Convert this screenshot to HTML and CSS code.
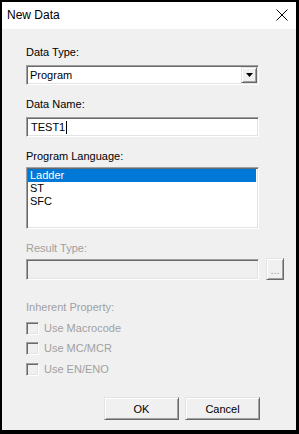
FILE: index.html
```html
<!DOCTYPE html>
<html lang="en">
<head>
  <meta charset="UTF-8">
  <meta name="viewport" content="width=device-width, initial-scale=1.0">
  <title>New Data</title>
  <link rel="stylesheet" href="styles.css">
</head>
<body>
  <div class="window">
    <div class="titlebar">
      <span class="title">New Data</span>
      <svg class="close" width="12" height="12" viewBox="0 0 12 12">
        <path d="M0.5 0.5 L11.5 11.5 M11.5 0.5 L0.5 11.5" stroke="#000" stroke-width="1" fill="none"/>
      </svg>
    </div>
    <div class="content">
      <label class="label first">Data Type:</label>
      <div class="combo sunken">
        <span class="combo-text">Program</span>
        <span class="drop raised">
          <svg width="7" height="4" viewBox="0 0 7 4"><polygon points="0,0 7,0 3.5,4" fill="#000"/></svg>
        </span>
      </div>

      <label class="label name">Data Name:</label>
      <div class="edit sunken">
        <span>TEST1</span><span class="caret"></span>
      </div>

      <label class="label">Program Language:</label>
      <div class="listbox sunken">
        <div class="item selected">Ladder</div>
        <div class="item">ST</div>
        <div class="item">SFC</div>
      </div>

      <label class="label disabled">Result Type:</label>
      <div class="result-row">
        <div class="edit sunken readonly"></div>
        <span class="dots raised">...</span>
      </div>

      <label class="label disabled prop">Inherent Property:</label>
      <div class="checks">
        <div class="check"><span class="box"></span>Use Macrocode</div>
        <div class="check"><span class="box"></span>Use MC/MCR</div>
        <div class="check"><span class="box"></span>Use EN/ENO</div>
      </div>

      <div class="buttons">
        <button class="btn raised">OK</button>
        <button class="btn raised">Cancel</button>
      </div>
    </div>
  </div>
</body>
</html>
```

FILE: styles.css
```css
body {
  margin: 0;
  background: #000;
  font-family: "Liberation Sans", Arial, sans-serif;
  font-size: 11px;
  color: #000;
}

.window {
  width: 294px;
  height: 428px;
  margin: 2px 0 0 2px;
  background: #f0f0f0;
}

.titlebar {
  height: 27px;
  background: #fff;
  display: flex;
  align-items: center;
  justify-content: space-between;
  padding: 0 8px 0 5px;
}

.title {
  font-size: 12px;
  line-height: 27px;
}

.close {
  display: block;
  margin-top: -1px;
}

.content {
  padding: 17px 0 0 24px;
}

.label {
  display: block;
  line-height: 13px;
  margin-top: 13px;
  margin-bottom: 4px;
}

.label.first,
.label.name {
  margin-bottom: 6px;
}

.label.first {
  margin-top: 0;
}

.disabled {
  color: #a0a0a0;
}

.label.prop {
  margin-top: 21px;
  margin-bottom: 8px;
}

/* classic 3d borders */
.sunken {
  border: 1px solid;
  border-color: #a0a0a0 #fff #fff #a0a0a0;
  box-shadow: inset 1px 1px 0 #696969, inset -1px -1px 0 #e3e3e3;
  box-sizing: border-box;
}

.raised {
  border: 1px solid;
  border-color: #e3e3e3 #696969 #696969 #e3e3e3;
  box-shadow: inset 1px 1px 0 #fff, inset -1px -1px 0 #a0a0a0;
  background: #f0f0f0;
  box-sizing: border-box;
}

.combo {
  width: 233px;
  height: 20px;
  background: #fff;
  display: flex;
  align-items: center;
  justify-content: space-between;
  padding: 0 1px 0 3px;
}

.combo-text {
  line-height: 13px;
}

.drop {
  width: 16px;
  height: 16px;
  display: flex;
  align-items: center;
  justify-content: center;
}

.drop svg {
  display: block;
}

.edit {
  width: 233px;
  height: 20px;
  background: #fff;
  display: flex;
  align-items: center;
  padding-left: 4px;
  line-height: 13px;
}

.caret {
  display: inline-block;
  width: 1px;
  height: 13px;
  background: #000;
  margin-left: 1px;
}

.listbox {
  width: 233px;
  height: 62px;
  background: #fff;
  padding: 1px 2px 0 1px;
}

.item {
  line-height: 13px;
  padding-left: 2px;
}

.item.selected {
  background: #0078d7;
  color: #fff;
}

.result-row {
  display: flex;
  align-items: center;
  gap: 7px;
}

.edit.readonly {
  background: #f0f0f0;
  height: 21px;
}

.dots {
  width: 18px;
  height: 22px;
  color: #a0a0a0;
  display: flex;
  align-items: center;
  justify-content: center;
  line-height: 13px;
  padding-top: 2px;
  margin-top: -1px;
}

.check {
  height: 20px;
  display: flex;
  align-items: flex-start;
  color: #a0a0a0;
  line-height: 13px;
  gap: 5px;
}

.check:nth-child(2) {
  height: 21px;
}

.box {
  width: 13px;
  height: 13px;
  box-sizing: border-box;
  border: 1px solid;
  border-color: #a0a0a0 #fff #fff #a0a0a0;
  box-shadow: inset 1px 1px 0 #696969, inset -1px -1px 0 #e3e3e3;
  background: #f0f0f0;
}

.buttons {
  display: flex;
  justify-content: flex-end;
  gap: 6px;
  margin-top: 14px;
  padding-right: 36px;
}

.btn {
  width: 75px;
  height: 23px;
  font-family: "Liberation Sans", Arial, sans-serif;
  font-size: 11px;
  color: #000;
  padding: 0;
}
```
